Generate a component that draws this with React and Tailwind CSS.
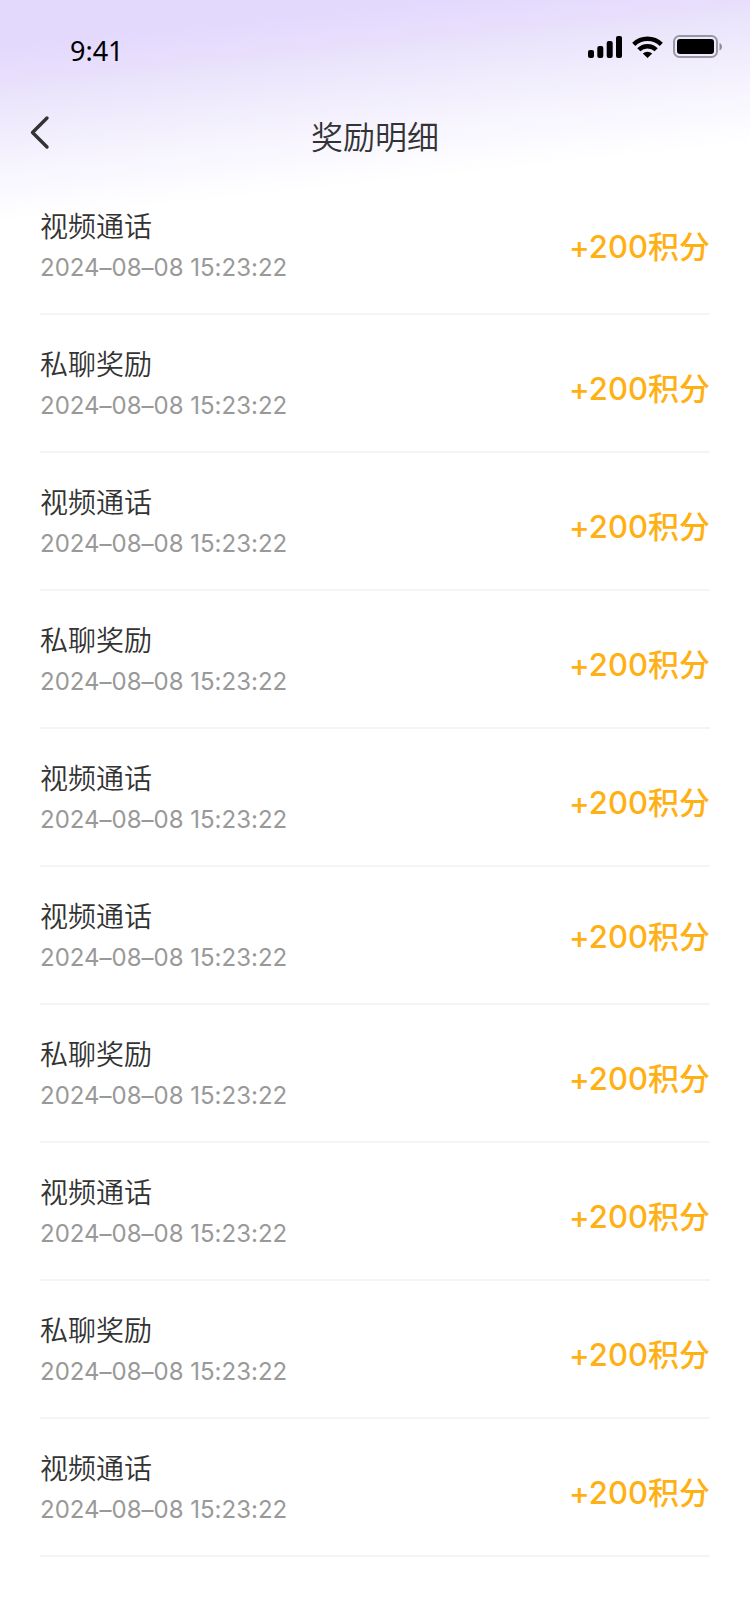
import React from "react";

const records = [
  "视频通话",
  "私聊奖励",
  "视频通话",
  "私聊奖励",
  "视频通话",
  "视频通话",
  "私聊奖励",
  "视频通话",
  "私聊奖励",
  "视频通话",
].map((title, id) => ({ id, title, time: "2024–08–08 15:23:22", points: "+200积分" }));

function SignalIcon() {
  return (
    <svg width="34" height="22" viewBox="0 0 34 22" fill="#000" aria-hidden="true">
      <rect x="0" y="14" width="6" height="8" rx="2" />
      <rect x="9.300" y="10" width="6" height="12" rx="2" />
      <rect x="18.700" y="5" width="6" height="17" rx="2" />
      <rect x="28" y="0" width="6" height="22" rx="2" />
    </svg>
  );
}

function WifiIcon() {
  return (
    <svg width="31" height="22" viewBox="0 0 31 22" aria-hidden="true">
      <g fill="none" stroke="#000" strokeWidth="4.400">
        <path d="M1.700 8.400a19.600 19.600 0 0 1 27.600 0" />
        <path d="M6.800 13.800a12.300 12.300 0 0 1 17.400 0" />
      </g>
      <path d="M10.800 17.600a6.800 6.800 0 0 1 9.400 0L15.500 22z" fill="#000" />
    </svg>
  );
}

function BatteryIcon() {
  return (
    <svg width="50" height="24" viewBox="0 0 50 24" aria-hidden="true">
      <rect x="1" y="1" width="43" height="21" rx="5.500" fill="none" stroke="#000" strokeOpacity="0.35" strokeWidth="2" />
      <rect x="4" y="4" width="37" height="15" rx="3" fill="#000" />
      <path d="M46.500 8v7.500c1.500-.6 2.500-2 2.500-3.750S48 8.600 46.500 8z" fill="#000" fillOpacity="0.4" />
    </svg>
  );
}

function StatusBar() {
  return (
    <div className="flex h-[98px] items-center justify-between pr-[27px] pl-[70px]">
      <span className="pt-1 font-['Noto_Sans',sans-serif] text-[27px] leading-8 text-black">9:41</span>
      <div className="flex items-center gap-[10px] pb-[5px]">
        <SignalIcon />
        <WifiIcon />
        <BatteryIcon />
      </div>
    </div>
  );
}

function NavBar() {
  return (
    <header className="grid h-[79px] grid-cols-[1fr_auto_1fr] items-center px-6">
      <button type="button" aria-label="返回" className="flex size-10 items-center pb-3 pl-1">
        <svg width="24" height="36" viewBox="0 0 24 36" fill="none" stroke="#333" strokeWidth="3.400" strokeLinecap="round" strokeLinejoin="round" aria-hidden="true">
          <path d="M19 4 4.500 18.500 19 33" />
        </svg>
      </button>
      <h1 className="text-[32px] leading-10 font-[350]">奖励明细</h1>
    </header>
  );
}

function RecordRow({ record, groupStart }) {
  return (
    <li className="flex h-[138px] items-center justify-between border-b-2 border-[#f4f4f4]">
      <div className="flex flex-col gap-px pt-[5px]">
        <p className="text-[28px] leading-10 font-[350]">{record.title}</p>
        <p className="text-2xl leading-10 text-[#999]">{record.time}</p>
      </div>
      <p className={groupStart ? "pt-1 text-[31px] leading-10 font-medium text-[#ffb014]" : "pt-3 text-[31px] leading-10 font-medium text-[#ffb014]"}>
        {record.points}
      </p>
    </li>
  );
}

export default function App() {
  return (
    <div className="min-h-screen bg-white bg-[linear-gradient(174deg,#e3d9fd_0px,#e3d9fd_45px,#e8defc_78px,#eae5fb_98px,#f5f2fe_155px,#ffffff_222px)] font-[Inter,'Noto_Sans_CJK_SC',sans-serif] [font-feature-settings:'calt'_0] text-[#333]">
      <StatusBar />
      <NavBar />
      <main className="px-10">
        <ul>
          {records.map((record) => (
            <RecordRow key={record.id} record={record} groupStart={record.id % 5 === 0} />
          ))}
        </ul>
      </main>
    </div>
  );
}
